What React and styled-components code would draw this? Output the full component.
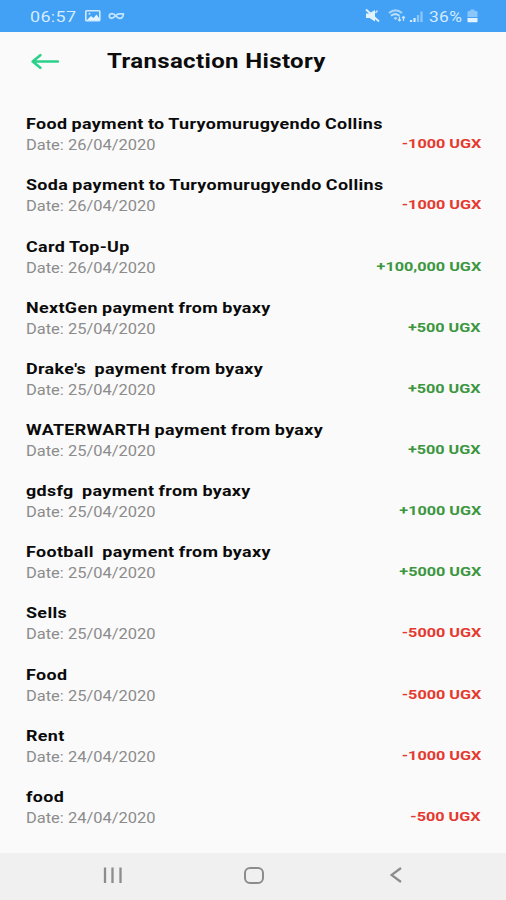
import styled, { createGlobalStyle } from 'styled-components';

const GlobalStyle = createGlobalStyle`
  * {
    box-sizing: border-box;
  }

  body {
    margin: 0;
    font-family: Roboto, sans-serif;
    background-color: #fafafa;
  }
`;

const Wrapper = styled.div`
  display: flex;
  flex-direction: column;
  height: 900px;
  overflow: hidden;
  background-color: #fafafa;
`;

const WideText = styled.div`
  white-space: pre;
  width: max-content;
  transform: scaleX(${({$stretch}) => $stretch || 1.156});
  transform-origin: ${({$right}) => $right ? 'right' : 'left'} center;
`;

const StatusBar = styled.div`
  display: flex;
  justify-content: space-between;
  flex: none;
  height: 31.5px;
  padding: 1px 28px 0 30px;
  background-color: #42a0f5;
  color: #d5ecfd;
`;

const StatusGroup = styled.div`
  display: flex;
  align-items: center;
`;

const Clock = styled(WideText)`
  width: 55px;
  margin-top: 1px;
  font-size: 15.5px;
  letter-spacing: 0.3px;
`;

const Battery = styled(WideText)`
  width: 38px;
  margin-top: 1px;
  font-size: 15px;
  letter-spacing: 0.3px;
`;

const Header = styled.header`
  display: flex;
  align-items: center;
  flex: none;
  height: 59px;
  padding-left: 31px;
`;

const Title = styled(WideText)`
  margin-left: 47px;
  font-size: 20px;
  font-weight: 700;
  letter-spacing: 0.3px;
  color: #0c0c0c;
`;

const List = styled.div`
  flex: 1;
  padding: 23.8px 25px 0 26px;
`;

const Row = styled.div`
  display: flex;
  justify-content: space-between;
  align-items: flex-start;
  height: 61.15px;
`;

const Name = styled(WideText)`
  height: 20px;
  font-size: 15px;
  line-height: 20px;
  font-weight: 700;
  letter-spacing: 0.3px;
  word-spacing: -0.5px;
  color: #0a0a0a;
`;

const DateText = styled(WideText)`
  font-size: 14px;
  line-height: 22px;
  color: #8c8c8c;
`;

const Amount = styled(WideText)`
  margin-top: 19px;
  font-size: 13.5px;
  line-height: 20px;
  font-weight: 700;
  color: ${({$negative}) => $negative ? '#e5392f' : '#3c9640'};
`;

const NavBar = styled.nav`
  display: flex;
  align-items: center;
  flex: none;
  height: 47.5px;
  padding: 0 0 2px 102px;
  background-color: #f0f0f0;
`;

const transactions = [
    {name: 'Food payment to Turyomurugyendo Collins', date: '26/04/2020', amount: '-1000'},
    {name: 'Soda payment to Turyomurugyendo Collins', date: '26/04/2020', amount: '-1000'},
    {name: 'Card Top-Up', date: '26/04/2020', amount: '+100,000'},
    {name: 'NextGen payment from byaxy', date: '25/04/2020', amount: '+500'},
    {name: 'Drake\'s  payment from byaxy', date: '25/04/2020', amount: '+500'},
    {name: 'WATERWARTH payment from byaxy', date: '25/04/2020', amount: '+500'},
    {name: 'gdsfg  payment from byaxy', date: '25/04/2020', amount: '+1000'},
    {name: 'Football  payment from byaxy', date: '25/04/2020', amount: '+5000'},
    {name: 'Sells', date: '25/04/2020', amount: '-5000'},
    {name: 'Food', date: '25/04/2020', amount: '-5000'},
    {name: 'Rent', date: '24/04/2020', amount: '-1000'},
    {name: 'food', date: '24/04/2020', amount: '-500'},
];

const LeftIcons = () => (
    <svg width="40" height="14" viewBox="0 0 40 14" fill="none">
        <rect x="0.8" y="1.8" width="14" height="10" rx="0.8" stroke="#cfe9fd" strokeWidth="1.6"/>
        <path d="M2 11L6 7L8.5 9L11.5 5.5L14 9V11Z" fill="#e4f4fe"/>
        <circle cx="4.5" cy="4.7" r="1" fill="#cfe9fd"/>
        <path
            d="M31 7.2C29.5 5 27.5 4.3 25.8 4.8C23.8 5.4 23.8 8.6 25.8 9.2C29 10 31 4.8 34 4.8H38.3C38.5 8 36.5 9.6 34.5 9.3C32.8 9 32 8.3 31 7.2Z"
            stroke="#c2e4fd"
            strokeWidth="1.8"
        />
    </svg>
);

const SignalIcons = () => (
    <svg width="64" height="16" viewBox="0 0 64 16" fill="none">
        <path d="M1 5.5H4L10 2V13.5L4.5 10H1Z" fill="#dff2fe"/>
        <path d="M1 1.5L14 13.5" stroke="#dff2fe" strokeWidth="1.8"/>
        <path d="M10.5 5L12.5 2.5" stroke="#bfe2fc" strokeWidth="1.5"/>
        <path d="M24 5C28 1.8 33 1.8 37 5" stroke="#a8d5fa" strokeWidth="2.2"/>
        <path d="M26 7.8C28.5 5.8 32 5.8 34.5 7.8" stroke="#b9dffb" strokeWidth="2"/>
        <path d="M28.5 10L30.5 9L32.5 10L30.5 12Z" fill="#b9dffb"/>
        <path d="M34.5 13V8.5M33 11.5L34.5 13L36 11.5M38.5 13V8.5M37 10L38.5 8.5L40 10" stroke="#c8e6fd" strokeWidth="1.2"/>
        <path d="M46 14V12M49.5 14V10" stroke="#cfe9fd" strokeWidth="2.3"/>
        <path d="M53 14V7M56.5 14V3.5" stroke="#8ac6fa" strokeWidth="2.3"/>
    </svg>
);

const BatteryIcon = () => (
    <svg width="11" height="14" viewBox="0 0 11 14">
        <path d="M3.5 0.5H7.5V2H9.5Q10.5 2 10.5 3V8H0.5V3Q0.5 2 1.5 2H3.5Z" fill="#8ac6fa"/>
        <path d="M0.5 9H10.5V12.5Q10.5 13.3 9.7 13.3H1.3Q0.5 13.3 0.5 12.5Z" fill="#e4f4fe"/>
    </svg>
);

const BackArrow = () => (
    <svg width="29" height="16" viewBox="0 0 29 16" fill="none" stroke="#2bd18a" strokeWidth="2.6" strokeLinecap="round" strokeLinejoin="round">
        <path d="M26.8 8.5H1.7M9.3 2.2L1.7 8.5L9.3 14.8"/>
    </svg>
);

const RecentsIcon = () => (
    <svg width="21" height="18" viewBox="0 0 21 18" stroke="#8c8c8c" strokeWidth="2.3">
        <path d="M3 1.5V17M10.5 1.5V17M18.5 1.5V17"/>
    </svg>
);

const HomeIcon = styled.div`
  width: 20px;
  height: 17px;
  margin: 0 126px 0 121px;
  border: 2px solid #8c8c8c;
  border-radius: 6px;
`;

const BackIcon = () => (
    <svg width="13" height="18" viewBox="0 0 13 18" fill="none">
        <path d="M11 2L1.5 9L11 16" stroke="#8c8c8c" strokeWidth="2.2"/>
    </svg>
);

const App = () => (
    <Wrapper>
        <GlobalStyle/>
        <StatusBar>
            <StatusGroup>
                <Clock>06:57</Clock>
                <LeftIcons/>
            </StatusGroup>
            <StatusGroup>
                <SignalIcons/>
                <Battery>36%</Battery>
                <BatteryIcon/>
            </StatusGroup>
        </StatusBar>
        <Header>
            <BackArrow/>
            <Title $stretch={1.2}>Transaction History</Title>
        </Header>
        <List>
            {transactions.map(({name, date, amount}) => (
                <Row key={name}>
                    <div>
                        <Name $stretch={1.192}>{name}</Name>
                        <DateText $stretch={1.175}>Date: {date}</DateText>
                    </div>
                    <Amount $right $stretch={1.2} $negative={amount.startsWith('-')}>{amount} UGX</Amount>
                </Row>
            ))}
        </List>
        <NavBar>
            <RecentsIcon/>
            <HomeIcon/>
            <BackIcon/>
        </NavBar>
    </Wrapper>
);

export default App;
